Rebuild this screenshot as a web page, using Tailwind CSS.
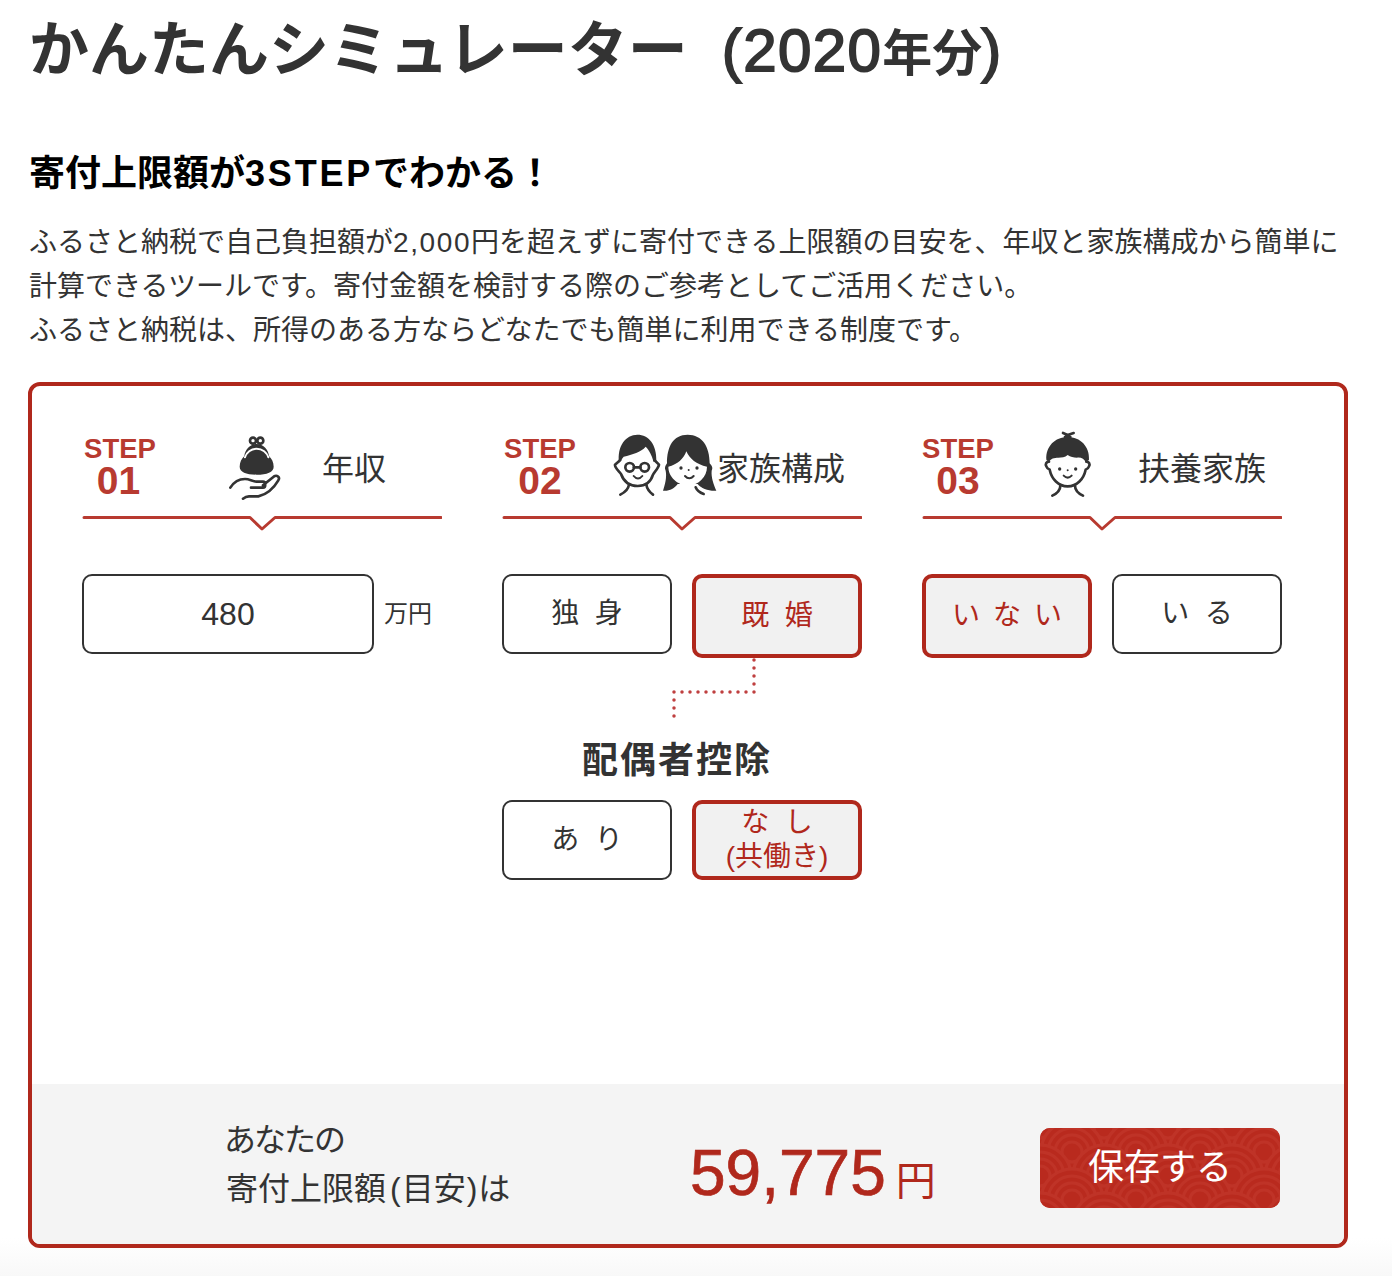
<!DOCTYPE html>
<html lang="ja">
<head>
  <meta charset="UTF-8" />
  <title>かんたんシミュレーター</title>
  <script src="https://cdn.jsdelivr.net/npm/@tailwindcss/browser@4"></script>
</head>
<body class="bg-white text-[#333] overflow-hidden font-['Liberation_Sans','Noto_Sans_CJK_JP',sans-serif]">
<div class="w-[1392px] h-[1276px] overflow-hidden bg-gradient-to-b from-white from-[97%] to-[#f8f8f8] pl-[28px]">

  <!-- Heading -->
  <h1 class="pt-[1px] text-[60px] leading-[100px] font-bold pl-[1px] whitespace-nowrap">かんたんシミュレーター<span class="ml-[34px] font-normal tracking-[1.4px] [-webkit-text-stroke:1.8px_#333]">(2020</span><span class="text-[50px]">年分</span><span class="-ml-[1px] font-normal [-webkit-text-stroke:1.8px_#333]">)</span></h1>
  <h2 class="mt-[48px] text-[36px] leading-[44px] font-bold text-black pl-[1px]">寄付上限額が<span class="tracking-[2.8px]">3STEP</span>でわかる！</h2>
  <p class="mt-[25px] text-[28px] leading-[44px] pl-[1px] whitespace-nowrap">
    ふるさと納税で自己負担額が<span class="tracking-[1.6px]">2,000</span>円を超えずに寄付できる上限額の目安を、年収と家族構成から簡単に<br>
    計算できるツールです。寄付金額を検討する際のご参考としてご活用ください。<br>
    ふるさと納税は、所得のある方ならどなたでも簡単に利用できる制度です。
  </p>

  <!-- Simulator -->
  <section class="mt-[29px] w-[1320px] h-[866px] border-4 border-[#b0281c] rounded-[12px] flex flex-col overflow-hidden">
    <div class="flex-1 pl-[50px] pt-[43px] grid grid-cols-[360px_360px_360px] gap-x-[60px] content-start">

      <!-- Step 1 -->
      <div>
        <div class="h-[87px] flex pl-[2px]">
          <div class="w-[72px] text-center text-[#b83a30] font-bold mt-[8px]"><div class="text-[27.5px] leading-[24px]">STEP</div><div class="mt-[5px] text-[39px] leading-[30px] -ml-[3px]">01</div></div>
          <svg class="ml-[72px] mt-[6px]" width="56" height="66" viewBox="475 45 168 198" fill="none" stroke="#333" stroke-width="8" stroke-linecap="round" stroke-linejoin="round">
            <circle cx="550" cy="62" r="9"/><circle cx="572" cy="62" r="9"/>
            <path d="M510 140c0-14 6-24 14-32 2-18 16-36 37-36s35 18 37 36c8 8 14 18 14 32 0 16-20 24-51 24s-51-8-51-24z" fill="#333" stroke="none"/>
            <path d="M526 112c4-14 18-26 35-26s31 12 35 26" stroke="#fff" stroke-width="6"/>
            <path d="M482 203c10-16 26-26 44-26 12 0 22 6 34 8h20c9 0 9 18 0 18h-36M580 196l32-26c10-7 20 2 14 11-14 24-34 42-60 48h-28c-6 0-12 2-18 7"/>
          </svg>
          <div class="ml-[38px] mt-[18px] text-[32px] leading-[44px]">年収</div>
        </div>
        <svg class="block" width="360" height="16" fill="none" stroke="#b83a30" stroke-width="3" stroke-linecap="round" stroke-linejoin="round"><path d="M2 1.5H168L180 13 193 1.5H359"/></svg>
        <div class="mt-[42px] flex items-center">
          <div class="w-[292px] h-[80px] border-2 border-[#333] rounded-[10px] flex items-center justify-center text-[32px]">480</div>
          <span class="ml-[10px] text-[24px]">万円</span>
        </div>
      </div>

      <!-- Step 2 -->
      <div>
        <div class="h-[87px] flex pl-[2px]">
          <div class="w-[72px] text-center text-[#b83a30] font-bold mt-[8px]"><div class="text-[27.5px] leading-[24px]">STEP</div><div class="mt-[5px] text-[39px] leading-[30px]">02</div></div>
          <svg class="ml-[37px] mt-[3px]" width="104" height="66" viewBox="370 36 312 198" fill="none" stroke="#333" stroke-width="8" stroke-linecap="round" stroke-linejoin="round">
            <path d="M388 128c-6-50 20-84 55-84s58 30 57 78l-8 4c-6-22-14-36-24-46-14 16-40 24-66 30z" fill="#333" stroke="none"/>
            <path d="M392 120l-16 14c-2 8 12 20 18 28 8 22 26 36 50 36s40-14 46-34c6-10 16-20 18-30l-14-14"/>
            <circle cx="420" cy="142" r="13"/><circle cx="465" cy="142" r="13"/><path d="M433 142h19"/>
            <path d="M432 168c8 10 18 10 26 0" stroke-width="6"/>
            <path d="M418 194c-2 14-14 24-26 30M470 194c2 14 12 24 20 30"/>
            <path d="M594 44c-44 0-62 36-62 86-6 8-8 14-4 22 4 20-2 42-8 60 18 2 34-6 44-20h60c10 14 36 22 56 20-8-18-16-40-14-60 4-8 2-14-6-22 0-50-22-86-66-86z" fill="#333" stroke="none"/>
            <path d="M536 140c28-6 46-24 54-46 10 22 30 40 62 46 0 30-25 56-57 56s-59-26-59-56z" fill="#fff" stroke="none"/>
            <circle cx="574" cy="144" r="5" fill="#333" stroke="none"/><circle cx="622" cy="144" r="5" fill="#333" stroke="none"/><circle cx="597" cy="150" r="3" fill="#333" stroke="none"/>
            <path d="M586 168c8 9 18 9 26 0" stroke-width="6"/>
            <path d="M618 202c4 10 12 16 24 20"/>
          </svg>
          <div class="mt-[18px] text-[32px] leading-[44px]">家族構成</div>
        </div>
        <svg class="block" width="360" height="16" fill="none" stroke="#b83a30" stroke-width="3" stroke-linecap="round" stroke-linejoin="round"><path d="M2 1.5H168L180 13 193 1.5H359"/></svg>
        <div class="mt-[42px] flex items-start gap-x-[20px]">
          <div class="w-[170px] h-[80px] border-2 border-[#333] rounded-[10px] flex items-center justify-center text-[28px]">独&nbsp;&nbsp;身</div>
          <div class="w-[170px] h-[84px] border-4 border-[#b0281c] bg-[#f1f1f1] text-[#b0281c] rounded-[10px] flex items-center justify-center text-[28px]">既&nbsp;&nbsp;婚</div>
        </div>
        <svg class="block" width="360" height="66" fill="none" stroke="#bf3f3f" stroke-width="3.5" stroke-dasharray="0 8" stroke-linecap="round"><path d="M252 2V34H172V66"/></svg>
        <div class="mt-[15px] text-center text-[36px] leading-[44px] font-bold tracking-[2px] w-[350px]">配偶者控除</div>
        <div class="mt-[17px] flex items-start gap-x-[20px]">
          <div class="w-[170px] h-[80px] border-2 border-[#333] rounded-[10px] flex items-center justify-center text-[28px]">あ&nbsp;&nbsp;り</div>
          <div class="w-[170px] h-[80px] border-4 border-[#b0281c] bg-[#f1f1f1] text-[#b0281c] rounded-[10px] flex flex-col items-center justify-center text-[28px] leading-[34px]"><span>な&nbsp;&nbsp;し</span><span>(共働き)</span></div>
        </div>
      </div>

      <!-- Step 3 -->
      <div>
        <div class="h-[87px] flex">
          <div class="w-[72px] text-center text-[#b83a30] font-bold mt-[8px]"><div class="text-[27.5px] leading-[24px]">STEP</div><div class="mt-[5px] text-[39px] leading-[30px]">03</div></div>
          <svg class="ml-[49px] mt-[2px]" width="50" height="68" viewBox="430 32 150 204" fill="none" stroke="#333" stroke-width="8" stroke-linecap="round" stroke-linejoin="round">
            <path d="M490 38l14 6 18-6M496 50c2-2 12-2 16 0" />
            <path d="M440 118c-2-40 26-68 64-68s66 28 64 68l-10 8c-4-10-14-16-26-14-10 0-20-2-28-8-8 8-18 8-28 8-12 0-24 2-28 14z" fill="#333" stroke="none"/>
            <path d="M448 124c-8 0-12 8-8 14 2 6 6 8 10 10 6 28 26 50 54 50s48-22 54-50c4-2 8-4 10-10 4-6 0-14-8-14"/>
            <circle cx="480" cy="146" r="5" fill="#333" stroke="none"/><circle cx="528" cy="146" r="5" fill="#333" stroke="none"/><circle cx="504" cy="150" r="3" fill="#333" stroke="none"/>
            <path d="M492 166c8 8 16 8 24 0" stroke-width="6"/>
            <path d="M482 196c0 14-12 24-24 30M526 196c0 14 12 24 24 30"/>
          </svg>
          <div class="ml-[45px] mt-[18px] text-[32px] leading-[44px]">扶養家族</div>
        </div>
        <svg class="block" width="360" height="16" fill="none" stroke="#b83a30" stroke-width="3" stroke-linecap="round" stroke-linejoin="round"><path d="M2 1.5H168L180 13 193 1.5H359"/></svg>
        <div class="mt-[42px] flex items-start gap-x-[20px]">
          <div class="w-[170px] h-[84px] border-4 border-[#b0281c] bg-[#f1f1f1] text-[#b0281c] rounded-[10px] flex items-center justify-center text-[28px] tracking-[13px] pl-[13px]">いない</div>
          <div class="w-[170px] h-[80px] border-2 border-[#333] rounded-[10px] flex items-center justify-center text-[28px]">い&nbsp;&nbsp;る</div>
        </div>
      </div>
    </div>

    <!-- Result bar -->
    <div class="h-[160px] bg-[#f4f4f4] flex items-center pl-[194px]">
      <div class="w-[464px] text-[32px] leading-[49px] mt-[2px]"><span class="-ml-[2px] tracking-[-2px]">あなたの</span><br>寄付上限額<span class="ml-[4px] mr-[1px]">(</span>目安<span class="ml-[1px] mr-[1px]">)</span>は</div>
      <div class="w-[350px] flex items-baseline mt-[18px] text-[#b0281c]">
        <span class="text-[64px] leading-none [-webkit-text-stroke:0.7px_#b0281c]">59,775</span><span class="ml-[10px] text-[40px] leading-none">円</span>
      </div>
      <button class="relative w-[240px] h-[80px] rounded-[10px] overflow-hidden bg-[#b92a1e] text-white text-[36px] mt-[8px]">
        <svg class="absolute inset-0" width="240" height="80" fill="none">
          <defs>
            <g id="scale" fill="#b92a1e" stroke="#bf3327" stroke-width="3">
              <circle r="31"/><circle r="24"/><circle r="17"/><circle r="10"/>
            </g>
            <pattern id="wave" width="64" height="48" patternUnits="userSpaceOnUse">
              <use href="#scale" x="32" y="-24"/>
              <use href="#scale" x="0" y="0"/><use href="#scale" x="64" y="0"/>
              <use href="#scale" x="32" y="24"/>
              <use href="#scale" x="0" y="48"/><use href="#scale" x="64" y="48"/>
              <use href="#scale" x="32" y="72"/>
            </pattern>
          </defs>
          <rect width="240" height="80" fill="url(#wave)"/>
        </svg>
        <span class="relative">保存する</span>
      </button>
    </div>
  </section>
</div>
</body>
</html>
